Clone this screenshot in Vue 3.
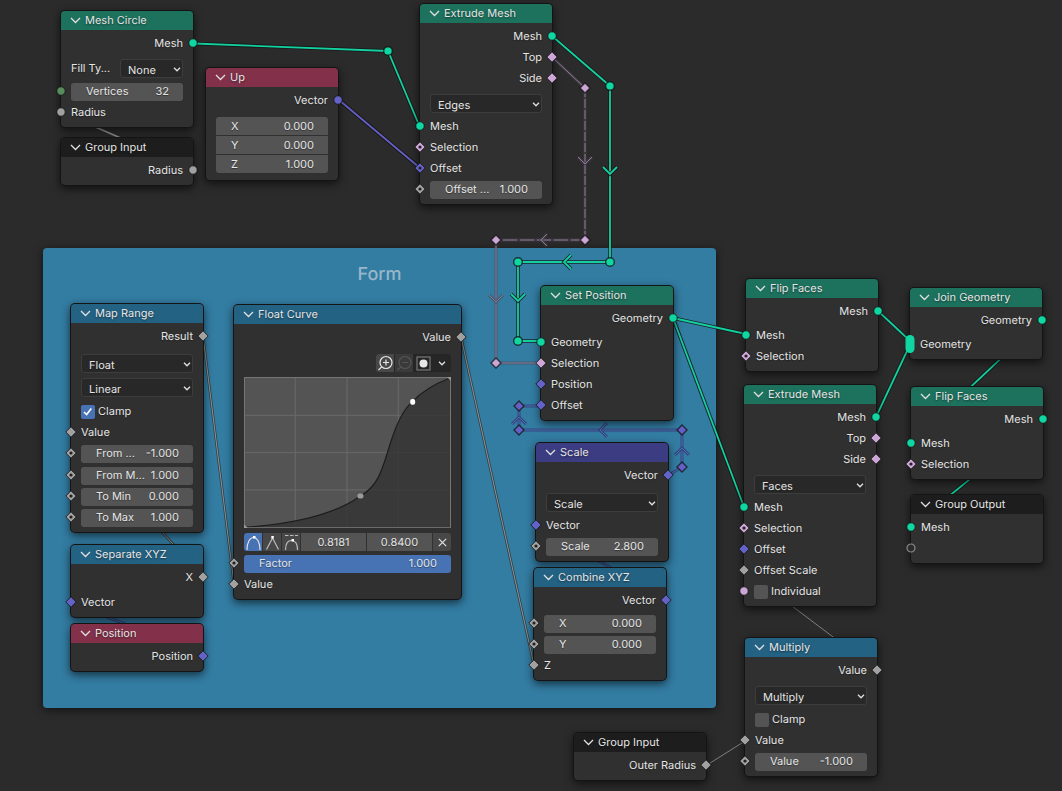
<script setup>
import { ref } from 'vue'

const out = (label, sock, gap = 0) => ({ type: 'out', label, sock, gap })
const inp = (label, sock, gap = 0) => ({ type: 'in', label, sock, gap })
const menu = (value, gap = 0, label = '') => ({ type: 'menu', value, gap, label })
const field = (label, value, sock = null, gap = 0) => ({ type: 'field', label, value, sock, gap })
const check = (label, checked, sock = null, gap = 0) => ({ type: 'check', label, checked, sock, gap })

const s = (kind, tone) => ({ kind, tone })
const geo = s('circle', 'geo')
const num = s('diamond', 'num')
const numDot = s('dot', 'num')
const vec = s('diamond', 'vec')
const bool = s('diamond', 'bool')
const boolDot = s('dot', 'bool')

const nodes = ref([
  { title: 'Mesh Circle', tone: 'green', x: 61, y: 11, rows: [
    out('Mesh', geo), menu('None', 4, 'Fill Ty...'),
    field('Vertices', '32', s('circle', 'int')), inp('Radius', s('circle', 'num')) ] },
  { title: 'Group Input', tone: 'black', x: 61, y: 138, rows: [out('Radius', s('circle', 'num'))] },
  { title: 'Up', tone: 'red', x: 206, y: 68, rows: [
    out('Vector', s('circle', 'vec')),
    { type: 'stack', gap: 6, items: [['X', '0.000'], ['Y', '0.000'], ['Z', '1.000']] } ] },
  { title: 'Extrude Mesh', tone: 'green', x: 420, y: 4, rows: [
    out('Mesh', geo), out('Top', bool), out('Side', bool), menu('Edges', 4),
    inp('Mesh', geo), inp('Selection', boolDot), inp('Offset', s('dot', 'vec')),
    field('Offset ...', '1.000', numDot) ] },
  { title: 'Map Range', tone: 'blue', x: 71, y: 304, rows: [
    out('Result', num), menu('Float', 6), menu('Linear', 1), check('Clamp', true, null, 1),
    inp('Value', num), field('From ...', '-1.000', numDot), field('From M...', '1.000', numDot, 1),
    field('To Min', '0.000', numDot), field('To Max', '1.000', numDot) ] },
  { title: 'Separate XYZ', tone: 'blue', x: 71, y: 545, rows: [out('X', num), inp('Vector', vec, 4)] },
  { title: 'Position', tone: 'red', x: 71, y: 624, rows: [out('Position', vec)] },
  { title: 'Float Curve', tone: 'blue', x: 234, y: 305, wide: true, rows: [
    out('Value', num), { type: 'curve', gap: 6 }, field('Factor', '1.000', numDot), inp('Value', num) ] },
  { title: 'Set Position', tone: 'green', x: 541, y: 286, rows: [
    out('Geometry', geo), inp('Geometry', geo, 3), inp('Selection', bool), inp('Position', vec), inp('Offset', vec) ] },
  { title: 'Scale', tone: 'violet', x: 536, y: 443, rows: [
    out('Vector', vec), menu('Scale', 6), inp('Vector', vec), field('Scale', '2.800', numDot) ] },
  { title: 'Combine XYZ', tone: 'blue', x: 534, y: 568, rows: [
    out('Vector', vec), field('X', '0.000', numDot, 2), field('Y', '0.000', numDot), inp('Z', num) ] },
  { title: 'Flip Faces', tone: 'green', x: 746, y: 279, rows: [
    out('Mesh', geo), inp('Mesh', geo, 3), inp('Selection', boolDot) ] },
  { title: 'Join Geometry', tone: 'green', x: 910, y: 288, rows: [
    out('Geometry', geo), inp('Geometry', s('multi', 'geo'), 3) ] },
  { title: 'Extrude Mesh', tone: 'green', x: 744, y: 385, rows: [
    out('Mesh', geo), out('Top', bool), out('Side', bool), menu('Faces', 4),
    inp('Mesh', geo), inp('Selection', boolDot), inp('Offset', vec), inp('Offset Scale', num),
    check('Individual', false, s('circle', 'bool')) ] },
  { title: 'Flip Faces', tone: 'green', x: 911, y: 387, rows: [
    out('Mesh', geo), inp('Mesh', geo, 3), inp('Selection', boolDot) ] },
  { title: 'Group Output', tone: 'black', x: 911, y: 495, rows: [inp('Mesh', geo), inp('', s('ring', 'none'))] },
  { title: 'Multiply', tone: 'blue', x: 745, y: 638, rows: [
    out('Value', num), menu('Multiply', 4), check('Clamp', false, null, 1),
    inp('Value', num), field('Value', '-1.000', numDot) ] },
  { title: 'Group Input', tone: 'black', x: 574, y: 733, rows: [out('Outer Radius', num)] },
])

const wires = [
  { tone: 'geo', d: 'M194 43.5L388 51L419 125' },
  { tone: 'vec', d: 'M339 100L420 168' },
  { tone: 'num', d: 'M194 170L61 112' },
  { tone: 'geo', d: 'M552 36L610 86V262H518V341H541' },
  { tone: 'boolfade', d: 'M552 57L585 88' },
  { tone: 'boolfade', d: 'M585 88V240', dash: '9 2' },
  { tone: 'boolfade', d: 'M585 240H496', dash: '14 3' },
  { tone: 'boolfade', d: 'M496 240V363H541' },
  { tone: 'vecfade', d: 'M669 475L682 467V430H519V406H541' },
  { tone: 'numfade', d: 'M203 336L234 584' },
  { tone: 'numfade', d: 'M461 337L534 665' },
  { tone: 'numfade', d: 'M203 577L71 432' },
  { tone: 'vecfade', d: 'M203 656L71 602' },
  { tone: 'vecfade', d: 'M667 600L536 525' },
  { tone: 'geo', d: 'M673 318L746 334' },
  { tone: 'geo', d: 'M673 318L744 507' },
  { tone: 'geo', d: 'M878 311L908 339' },
  { tone: 'geo', d: 'M876 417L908 349' },
  { tone: 'geo', d: 'M1042 320L911 443' },
  { tone: 'geo', d: 'M1044 419L911 527' },
  { tone: 'thin', d: 'M877 670L744 570' },
  { tone: 'thin', d: 'M707 765L745 741' },
]
const arrows = [
  { tone: 'boolfade', d: 'M578 157L585 164L592 157' },
  { tone: 'geo', d: 'M603 167L610 174L617 167' },
  { tone: 'boolfade', d: 'M547 234L541 240L547 246' },
  { tone: 'boolfade', d: 'M489 295L496 302L503 295' },
  { tone: 'geo', d: 'M571 255L564 262L571 269' },
  { tone: 'geo', d: 'M511 294L518 301L525 294' },
  { tone: 'vecfade', d: 'M607 423L600 430L607 437' },
  { tone: 'vecfade', d: 'M512 424L519 417L526 424' },
  { tone: 'vecfade', d: 'M675 455L682 448L689 455' },
]
const dots = [[388, 51], [610, 86], [610, 262], [518, 262], [518, 341]]
const gems = [
  ['bool', 585, 88], ['bool', 585, 240], ['bool', 496, 240], ['bool', 496, 363],
  ['vec', 682, 467], ['vec', 682, 430], ['vec', 519, 430], ['vec', 519, 406],
]
</script>

<template>
  <main class="editor">
    <section class="frame" aria-label="Form">
      <h2>Form</h2>
    </section>

    <svg class="wires" aria-hidden="true">
      <g v-for="(w, i) in wires" :key="'w' + i" :class="['wire', w.tone]">
        <path class="edge" :d="w.d" />
        <path class="core" :d="w.d" :stroke-dasharray="w.dash" />
      </g>
      <g v-for="(a, i) in arrows" :key="'a' + i" :class="['wire', a.tone]">
        <path class="edge" :d="a.d" />
        <path class="core" :d="a.d" />
      </g>
      <circle v-for="(p, i) in dots" :key="'d' + i" class="reroute geo" :cx="p[0]" :cy="p[1]" r="4.3" />
      <path v-for="(g, i) in gems" :key="'g' + i" :class="['reroute', g[0]]"
        :d="`M${g[1]} ${g[2] - 5}l5 5l-5 5l-5 -5z`" />
    </svg>

    <article v-for="(n, ni) in nodes" :key="ni" :class="['node', { wide: n.wide }]"
      :style="{ left: n.x + 'px', top: n.y + 'px' }">
      <header :class="n.tone">
        <button type="button" aria-label="Collapse node">
          <svg width="11" height="7" viewBox="0 0 11 7"><path d="M1 1L5.5 5.5L10 1" /></svg>
        </button>
        <h3>{{ n.title }}</h3>
      </header>
      <div class="body">
        <div v-for="(r, ri) in n.rows" :key="ri" :class="['row', r.type, 'gap' + r.gap]">
          <svg v-if="r.sock" :class="['socket', r.sock.kind, r.sock.tone]" viewBox="-10 -10 20 20" aria-hidden="true">
            <circle v-if="r.sock.kind === 'circle'" r="4.2" />
            <circle v-else-if="r.sock.kind === 'ring'" r="4" />
            <rect v-else-if="r.sock.kind === 'multi'" x="-4.5" y="-9" width="9" height="18" rx="4.5" />
            <path v-else d="M0 -5.2L5.2 0L0 5.2L-5.2 0Z" />
            <circle v-if="r.sock.kind === 'dot'" class="hole" r="1.6" />
          </svg>

          <span v-if="r.type === 'out' || r.type === 'in'">{{ r.label }}</span>

          <template v-else-if="r.type === 'menu'">
            <label v-if="r.label" :for="`m${ni}-${ri}`">{{ r.label }}</label>
            <div class="select">
              <select :id="`m${ni}-${ri}`" :aria-label="r.label || n.title + ' mode'">
                <option>{{ r.value }}</option>
              </select>
              <svg width="8" height="5" viewBox="0 0 8 5"><path d="M1 .8L4 3.8L7 .8" /></svg>
            </div>
          </template>

          <label v-else-if="r.type === 'field'" :class="['number', { slider: r.label === 'Factor' }]">
            <span>{{ r.label }}</span><input v-model="r.value" type="text">
          </label>

          <label v-else-if="r.type === 'check'" class="tick">
            <input v-model="r.checked" type="checkbox">
            <svg v-if="r.checked" width="13" height="13" viewBox="0 0 13 13"><path d="M3 7L5.6 9.5L10.3 3.5" /></svg>
            <span>{{ r.label }}</span>
          </label>

          <template v-else-if="r.type === 'stack'">
            <label v-for="it in r.items" :key="it[0]" class="number">
              <span>{{ it[0] }}</span><input v-model="it[1]" type="text">
            </label>
          </template>

          <template v-else>
            <div class="tools">
              <button type="button" aria-label="Zoom in" class="lit">
                <svg width="17" height="17" viewBox="0 0 17 17"><circle cx="9" cy="7.5" r="6" /><path d="M4.7 11.8L1.5 15M9 4.5V10.5M6 7.5H12" /></svg>
              </button>
              <button type="button" aria-label="Zoom out" class="off">
                <svg width="17" height="17" viewBox="0 0 17 17"><circle cx="9" cy="7.5" r="6" /><path d="M4.7 11.8L1.5 15M6 7.5H12" /></svg>
              </button>
              <button type="button" aria-label="Clipping">
                <svg width="17" height="17" viewBox="0 0 17 17"><rect x="2" y="2" width="13" height="13" class="box" /><circle cx="8.5" cy="8.5" r="4" class="ball" /></svg>
              </button>
              <button type="button" aria-label="Curve tools">
                <svg class="drop" width="8" height="5" viewBox="0 0 8 5"><path d="M1 .8L4 3.8L7 .8" /></svg>
              </button>
            </div>
            <svg class="chart" viewBox="0 0 208 152" role="img" aria-label="Float curve">
              <rect class="back" x="0" y="0" width="208" height="152" />
              <path class="grid" d="M51.5 0V152M103.5 0V152M155 0V152M0 38.5H208M0 76H208M0 113.5H208" />
              <path class="under" d="M1 151C45 148 90 139 117 119.5C139 107 140 85 150 58C156 41 162 31 169 25C180 13 194 6 207 1V151Z" />
              <path class="curve" d="M1 151C45 148 90 139 117 119.5C139 107 140 85 150 58C156 41 162 31 169 25C180 13 194 6 207 1" />
              <path class="rim" d="M.5 152V.5H207.5V151.5H0" />
              <rect class="point" x="114" y="117" width="6" height="5" rx="2" />
              <rect class="point on" x="167" y="22" width="5" height="6" rx="2" />
              <path class="point" d="M204 0H208V4ZM0 148V152H4Z" />
            </svg>
            <div class="points">
              <button type="button" aria-label="Auto handle" class="active">
                <svg width="17" height="17" viewBox="0 0 17 17"><path d="M2 16C2 8 5 3.5 8.5 3.5S15 8 15 16" /><rect x="8" y="2" width="2.5" height="2.5" /></svg>
              </button>
              <button type="button" aria-label="Vector handle">
                <svg width="17" height="17" viewBox="0 0 17 17"><path d="M2.5 15.5L8.5 4L14.5 15.5" /><rect x="7.3" y="2" width="2.5" height="2.5" /></svg>
              </button>
              <button type="button" aria-label="Auto clamped handle">
                <svg width="17" height="17" viewBox="0 0 17 17"><path d="M2.5 16C2.5 9 5 6.5 8.5 6.5S14.5 9 14.5 16" /><path d="M2 1.5H15" stroke-dasharray="3.5 1.5" /><rect x="8.5" y="5" width="2.5" height="2.5" /></svg>
              </button>
              <input type="text" value="0.8181" aria-label="Point X">
              <input type="text" value="0.8400" aria-label="Point Y">
              <button type="button" aria-label="Delete point" class="delete">
                <svg width="9" height="9" viewBox="0 0 9 9"><path d="M.8 .8L8.2 8.2M8.2 .8L.8 8.2" /></svg>
              </button>
            </div>
          </template>
        </div>
      </div>
    </article>
  </main>
</template>

<style>
html, body { margin: 0; background: #2b2b2b; }
</style>

<style scoped>
.editor {
  position: relative;
  min-height: 100vh;
  overflow: hidden;
  background: #2b2b2b;
  color: #e6e6e6;
  font: 11px/21px Inter, "Liberation Sans", sans-serif;
  text-rendering: geometricPrecision;
}
.editor * { box-sizing: border-box; }
h2, h3 { margin: 0; font-weight: 400; }
svg { display: block; fill: none; }
button, input, select {
  margin: 0; padding: 0; border: 0; background: none;
  color: inherit; font: inherit; min-width: 0;
  text-rendering: inherit; text-shadow: inherit;
}
.frame {
  position: absolute;
  left: 43px; top: 248px;
  width: 673px; height: 460px;
  border-radius: 4px;
  background: #337ca2;
  box-shadow: 0 2px 8px #0009;
  padding-top: 15px;
}
.frame h2 { font-size: 18px; font-weight: 500; line-height: 24px; text-align: center; color: #98b8ca; }

.wires { position: absolute; inset: 0; width: 100%; height: 100%; }
.wire path { fill: none; }
.edge { stroke: #111c; stroke-width: 3.6; }
.core { stroke-width: 1.8; }
.geo .core { stroke: #14cf9f; }
.vec .core { stroke: #6560c4; }
.num .core { stroke: #929292; }
.num .edge, .thin .edge { stroke: none; }
.boolfade .core { stroke: #8c7892; stroke-width: 1; }
.boolfade .edge { stroke: #4a44528c; stroke-width: 3; }
.vecfade .core { stroke: #4470a4; stroke-width: 1; }
.vecfade .edge { stroke: #364684; stroke-width: 3; }
.numfade .core { stroke: #8a969a; stroke-width: 1; }
.numfade .edge { stroke: #343e44; stroke-width: 2.6; }
.thin .core { stroke: #808080; stroke-width: 1; }
.reroute { stroke: #111b; stroke-width: 1.4; }
.reroute.geo { fill: #10d6a2; }
.reroute.bool { fill: #cca6d6; }
.reroute.vec { fill: #6460c4; }

.node {
  position: absolute;
  width: 132px;
  border-radius: 4px;
  background: #303030;
  box-shadow: 0 0 0 1px #141414, 0 3px 8px 1px #0009;
}
.node.wide { width: 227px; }
header {
  display: flex; align-items: center; gap: 4px;
  height: 19px; padding-left: 9px;
  border-radius: 4px 4px 0 0;
  text-shadow: 0 1px 2px #0008;
}
header button { display: flex; }
header path { stroke: #e0e0e0; stroke-width: 1.3; }
h3 { font-size: 11px; line-height: 19px; }
.green { background: #1d725e; }
.blue { background: #246283; }
.red { background: #83314a; }
.violet { background: #3c3c83; }
.black { background: #1d1d1d; }
.body { display: flex; flex-direction: column; padding: 3px 10px 4px; }
.row { position: relative; display: flex; align-items: center; min-height: 21px; white-space: nowrap; text-shadow: 0 1px 1px #0006; }
.gap1 { margin-top: 1px; }
.gap2 { margin-top: 2px; }
.gap3 { margin-top: 3px; }
.gap4 { margin-top: 4px; }
.gap6 { margin-top: 6px; }
.menu { margin-bottom: 2px; }
.out { justify-content: flex-end; }

.socket { position: absolute; left: -20px; top: 0; width: 20px; height: 20px; overflow: visible; }
.out .socket { left: auto; right: -20px; }
.socket > * { stroke: #111c; stroke-width: 1; }
.socket.geo { fill: #10d6a2; }
.socket.num { fill: #a1a1a1; }
.socket.int { fill: #598c5c; }
.socket.vec { fill: #6363c7; }
.socket.bool { fill: #cca6d6; }
.socket .hole { fill: #222; stroke: none; }
.ring > circle { stroke: #8a8a8a; fill: #2b2b2b; stroke-width: 1.2; }
.multi > rect { stroke: none; }

.select { position: relative; flex: 1; display: flex; }
.menu label { flex: none; width: 49px; }
select {
  width: 100%; height: 19px; padding-left: 7px;
  border: 1px solid #3d3d3d; border-radius: 3px;
  background: #282828; appearance: none;
}
.select svg { position: absolute; right: 2px; top: 8px; pointer-events: none; }
.select path, .drop path { stroke: #e0e0e0; stroke-width: 1.3; }
.number {
  display: flex; flex: 1; align-items: center; height: 18px; min-width: 0;
  padding: 0 14px 0 15px; border-radius: 3px; background: #545454;
}
.number span { flex: none; }
.number input { flex: 1; width: 0; height: 18px; text-align: right; }
.slider { background: #4772b3; }
.stack { flex-direction: column; align-items: stretch; gap: 1px; padding-bottom: 3px; }
.stack .number { flex: none; border-radius: 0; }
.stack .number:first-child { border-radius: 3px 3px 0 0; }
.stack .number:last-child { border-radius: 0 0 3px 3px; }
.tick { position: relative; display: flex; align-items: center; gap: 3px; }
.tick input { appearance: none; width: 14px; height: 14px; border-radius: 2px; background: #545454; }
.tick input:checked { background: #4772b3; }
.tick svg { position: absolute; left: 0; top: 4px; pointer-events: none; }
.tick path { stroke: #fff; stroke-width: 1.6; }

.curve.row { flex-direction: column; align-items: stretch; padding-bottom: 2px; }
.tools { display: flex; align-self: flex-end; gap: 1px; height: 18px; border-radius: 3px; background: #262626; overflow: hidden; }
.tools button { display: flex; align-items: center; justify-content: center; width: 18px; }
.tools svg { stroke: #e6e6e6; stroke-width: 1.2; }
.tools .lit { background: #484848; }
.tools .off { background: #3a3a3a; }
.tools .off svg { stroke: #555; }
.tools .box { stroke: #777; }
.tools .ball { fill: #e6e6e6; stroke: none; }
.chart { width: 100%; margin: 5px 0; }
.back { fill: #545454; }
.grid { stroke: #6a6a6a; }
.under { fill: #303030c0; }
path.curve { stroke: #1d1d1d; stroke-width: 1.2; }
.rim { stroke: #777; }
.point { fill: #9a9a9a; }
.point.on { fill: #fff; }
.points { display: flex; gap: 1px; height: 18px; border-radius: 3px; overflow: hidden; }
.points button { display: flex; align-items: center; justify-content: center; width: 18px; background: #484848; }
.points .active { background: #4772b3; }
.points svg { stroke: #bbb; stroke-width: 1.2; }
.points rect { fill: #fff; stroke: none; }
.points .active svg, .points .delete svg { stroke: #e0e0e0; }
.points input { flex: 1; width: 0; background: #545454; text-align: center; }
</style>
